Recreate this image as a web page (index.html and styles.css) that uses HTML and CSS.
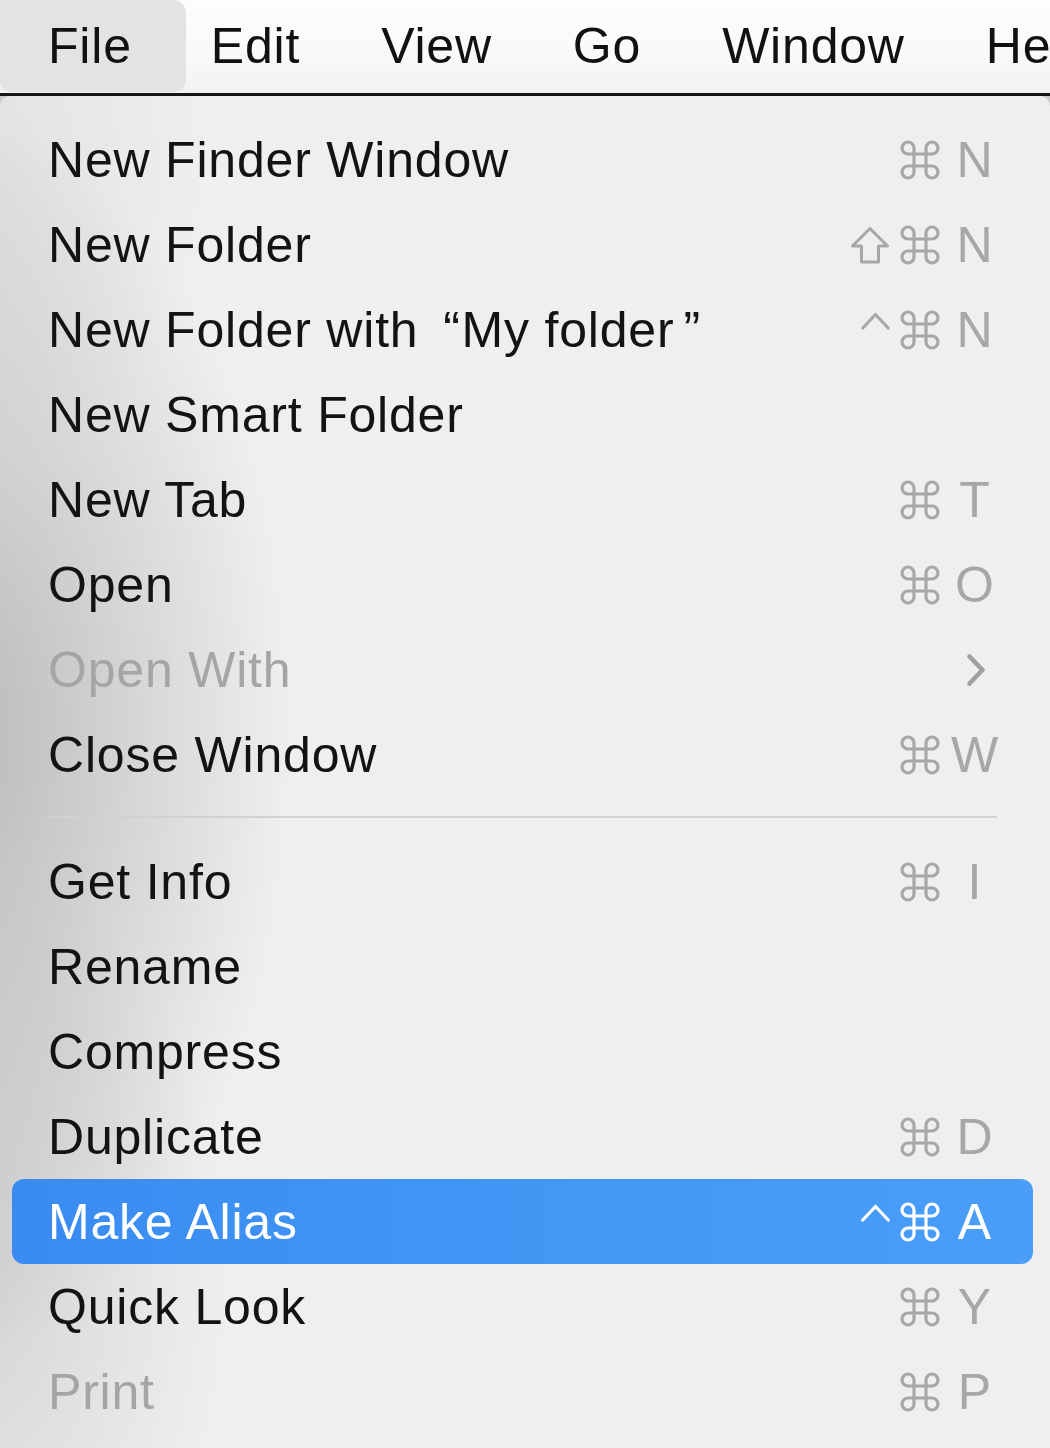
FILE: index.html
```html
<!DOCTYPE html>
<html lang="en">
<head>
<meta charset="utf-8">
<title>Finder File menu</title>
<link rel="stylesheet" href="styles.css">
</head>
<body>
<svg class="defs" width="0" height="0" aria-hidden="true">
  <symbol id="i-cmd" viewBox="2 2 20 20">
    <path d="M15 6v12a3 3 0 1 0 3-3H6a3 3 0 1 0 3 3V6a3 3 0 1 0-3 3h12a3 3 0 1 0-3-3" fill="none" stroke="currentColor" stroke-width="1.6" stroke-linecap="round" stroke-linejoin="round"/>
  </symbol>
  <symbol id="i-shift" viewBox="0 0 40 38">
    <path d="M20 2.5 L37.5 20 H28.5 V36 H11.5 V20 H2.5 Z" fill="none" stroke="currentColor" stroke-width="3" stroke-linejoin="round"/>
  </symbol>
  <symbol id="i-ctrl" viewBox="0 0 29 38">
    <path d="M1.8 17 L14.5 3.5 L27.2 17" fill="none" stroke="currentColor" stroke-width="3.2" stroke-linecap="round" stroke-linejoin="round"/>
  </symbol>
  <symbol id="i-chev" viewBox="0 0 22 36">
    <path d="M4.5 4.5 L17.5 18 L4.5 31.5" fill="none" stroke="currentColor" stroke-width="4.6" stroke-linecap="round" stroke-linejoin="round"/>
  </symbol>
</svg>

<nav class="menubar">
  <span class="title active">File</span>
  <span class="title">Edit</span>
  <span class="title">View</span>
  <span class="title">Go</span>
  <span class="title">Window</span>
  <span class="title">Help</span>
</nav>

<div class="menu">
  <div class="item"><span class="label">New Finder Window</span>
    <span class="keys"><span class="mods"><svg class="cmd"><use href="#i-cmd"/></svg></span><span class="key">N</span></span></div>
  <div class="item"><span class="label">New Folder</span>
    <span class="keys"><span class="mods"><svg class="shift"><use href="#i-shift"/></svg><svg class="cmd"><use href="#i-cmd"/></svg></span><span class="key">N</span></span></div>
  <div class="item"><span class="label">New Folder with <span class="q-open">“</span>My folder<span class="q-close">”</span></span>
    <span class="keys"><span class="mods"><svg class="ctrl"><use href="#i-ctrl"/></svg><svg class="cmd"><use href="#i-cmd"/></svg></span><span class="key">N</span></span></div>
  <div class="item"><span class="label">New Smart Folder</span></div>
  <div class="item"><span class="label">New Tab</span>
    <span class="keys"><span class="mods"><svg class="cmd"><use href="#i-cmd"/></svg></span><span class="key">T</span></span></div>
  <div class="item"><span class="label">Open</span>
    <span class="keys"><span class="mods"><svg class="cmd"><use href="#i-cmd"/></svg></span><span class="key">O</span></span></div>
  <div class="item disabled"><span class="label">Open With</span>
    <span class="keys"><span class="key"><svg class="chev"><use href="#i-chev"/></svg></span></span></div>
  <div class="item"><span class="label">Close Window</span>
    <span class="keys"><span class="mods"><svg class="cmd"><use href="#i-cmd"/></svg></span><span class="key">W</span></span></div>

  <div class="sep"></div>

  <div class="item"><span class="label">Get Info</span>
    <span class="keys"><span class="mods"><svg class="cmd"><use href="#i-cmd"/></svg></span><span class="key">I</span></span></div>
  <div class="item"><span class="label">Rename</span></div>
  <div class="item"><span class="label">Compress</span></div>
  <div class="item"><span class="label">Duplicate</span>
    <span class="keys"><span class="mods"><svg class="cmd"><use href="#i-cmd"/></svg></span><span class="key">D</span></span></div>
  <div class="item selected"><span class="label">Make Alias</span>
    <span class="keys"><span class="mods"><svg class="ctrl"><use href="#i-ctrl"/></svg><svg class="cmd"><use href="#i-cmd"/></svg></span><span class="key">A</span></span></div>
  <div class="item"><span class="label">Quick Look</span>
    <span class="keys"><span class="mods"><svg class="cmd"><use href="#i-cmd"/></svg></span><span class="key">Y</span></span></div>
  <div class="item disabled"><span class="label">Print</span>
    <span class="keys"><span class="mods"><svg class="cmd"><use href="#i-cmd"/></svg></span><span class="key">P</span></span></div>
</div>
</body>
</html>
```

FILE: styles.css
```css
html, body {
  margin: 0;
  padding: 0;
}

body {
  width: 1050px;
  height: 1448px;
  overflow: hidden;
  background: #c9c9c9;
  font-family: "Liberation Sans", Arial, "DejaVu Sans", sans-serif;
  -webkit-font-smoothing: antialiased;
}

.defs {
  position: absolute;
  width: 0;
  height: 0;
  overflow: hidden;
}

/* ---------- menu bar ---------- */
.menubar {
  display: flex;
  height: 93px;
  border-bottom: 3px solid #161616;
  background: linear-gradient(180deg, #fdfdfd 0%, #f8f8f8 70%, #f1f1f1 100%);
  white-space: nowrap;
  overflow: hidden;
  font-size: 50px;
  line-height: 93px;
  letter-spacing: 0.8px;
  color: #111;
}

.title {
  flex: none;
  padding: 0 40.5px;
}

.title.active {
  height: 92px;
  padding: 0 54px 0 48px;
  margin-right: -15.5px;
  background: #e1e3e4;
  border-radius: 0 13px 13px 10px;
}

/* ---------- dropdown ---------- */
.menu {
  box-sizing: border-box;
  width: 1050px;
  height: 1352px;
  padding: 21px 17px 0 12px;
  border-radius: 10px 10px 0 0;
  background:
    radial-gradient(ellipse 330px 620px at -40px 640px, rgba(140, 140, 140, 0.55), rgba(140, 140, 140, 0) 100%),
    radial-gradient(ellipse 260px 420px at -30px 1180px, rgba(160, 160, 160, 0.35), rgba(160, 160, 160, 0) 100%),
    radial-gradient(ellipse 240px 300px at -30px 80px, rgba(180, 180, 180, 0.25), rgba(180, 180, 180, 0) 100%),
    #efefef;
}

.item {
  display: flex;
  align-items: center;
  height: 85px;
  padding: 0 36px;
  border-radius: 12px;
  font-size: 50px;
  letter-spacing: 0.8px;
  color: #131313;
  white-space: nowrap;
}

.label {
  flex: 1;
}

.q-open {
  margin-left: 10px;
  margin-right: 1px;
}

.q-close {
  margin-left: 9px;
}

.keys {
  display: flex;
  align-items: center;
  color: #a7a7a7;
}

.mods {
  display: flex;
  align-items: center;
  gap: 10px;
}

.key {
  display: flex;
  justify-content: center;
  align-items: center;
  width: 45px;
  margin-left: 12px;
  letter-spacing: 0;
}

.cmd {
  width: 40px;
  height: 40px;
}

.shift {
  width: 40px;
  height: 38px;
}

.ctrl {
  width: 29px;
  height: 38px;
}

.chev {
  width: 22px;
  height: 36px;
  margin-left: 3px;
  color: #a0a0a0;
}

.item.disabled {
  color: #a5a5a5;
}

.item.selected {
  background: linear-gradient(90deg, #3a8bf1 0%, #4297f5 50%, #4a9ef8 100%);
  color: #fff;
}

.item.selected .keys {
  color: #fff;
}

.sep {
  height: 2px;
  margin: 19px 36px 21px 35px;
  background: #d1d1d1;
}
```
